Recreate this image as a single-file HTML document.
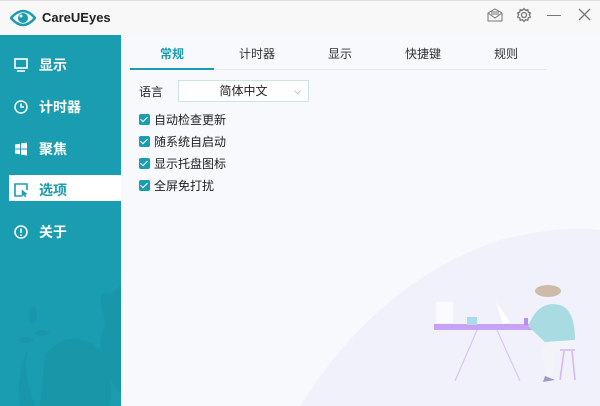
<!DOCTYPE html>
<html><head><meta charset="utf-8"><style>
body{margin:0;width:600px;height:406px;overflow:hidden;font-family:"Liberation Sans","Noto Sans CJK SC",sans-serif;background:#f7f9fd;position:relative}
.tb{position:absolute;left:0;top:0;width:600px;height:35px;background:#f8f8f8;border-top:1px solid #ddd;box-sizing:border-box}
.side{position:absolute;left:0;top:35px;width:121px;height:371px;background:#1a9db0;overflow:hidden}
.it{position:absolute;left:14px;color:#fff;font-size:14px;font-weight:bold;display:flex;align-items:center}
.it span{margin-left:11px}
.sel{position:absolute;left:9px;top:140px;width:112px;height:26px;background:#fff}
.tab{position:absolute;top:45px;font-size:12px;color:#333}
.cb{position:absolute;left:139px;font-size:12px;color:#222;display:flex;align-items:center}
.cb i{width:11px;height:11px;background:#1a9db0;border-radius:2px;margin-right:4px;display:inline-block;position:relative}
.cb i:after{content:"";position:absolute;left:3px;top:1px;width:3px;height:6px;border:solid #fff;border-width:0 1.5px 1.5px 0;transform:rotate(45deg)}
</style></head><body>
<svg style="position:absolute;left:0;top:0" width="600" height="406"><path d="M300 406 Q380 280 500 240 Q560 225 600 230 V406Z" fill="#f0f1fb"/>
<rect x="436" y="302" width="17" height="21" fill="#fbfbff"/>
<rect x="434" y="324" width="111" height="6" fill="#c9a3f3"/>
<rect x="467" y="317" width="10" height="8" fill="#a9dcea"/>
<path d="M496 302 L510 322 L503 324Z" fill="#fff"/>
<path d="M477 330 L455 381 M497 330 L520 381" stroke="#dbbdf8" stroke-width="1"/>
<rect x="524" y="318" width="4" height="7" fill="#b88ef0"/>
<ellipse cx="548" cy="291" rx="13" ry="6" fill="#cfbca8"/>
<path d="M530 322 Q540 300 560 305 Q575 310 575 340 L545 342 L528 326Z" fill="#a9dbe2"/>
<path d="M548 342 L575 340 L568 350 L555 352 L552 376 L545 376 L542 350Z" fill="#f2f4f8"/>
<path d="M545 376 l10 4 l-12 2z" fill="#9a9cc0"/>
<path d="M560 350 h15 M564 351 L560 380 M572 351 L575 380" stroke="#d6b4f8" stroke-width="1.5"/></svg>
<div class="tb">
<svg style="position:absolute;left:10px;top:7px" width="26" height="20" viewBox="0 0 26 20"><path d="M1 10 Q13 -4 25 10 Q13 24 1 10Z" fill="none" stroke="#1a9db0" stroke-width="2.5"/><circle cx="13" cy="10" r="5" fill="#1a9db0"/><circle cx="11" cy="8" r="1.5" fill="#fff"/></svg>
<div style="position:absolute;left:42px;top:9px;font-size:13px;font-weight:bold;color:#222">CareUEyes</div>
<svg style="position:absolute;left:487px;top:7px" width="16" height="14" viewBox="0 0 16 14" fill="none" stroke="#777"><path d="M1 5 L8 1 L15 5 V13 H1Z M1 5 L8 10 L15 5 M4 4h8M4 6h8"/></svg>
<svg style="position:absolute;left:516px;top:6px" width="16" height="16" viewBox="0 0 16 16" fill="none" stroke="#777" stroke-width="1.3"><circle cx="8" cy="8" r="2.5"/><path d="M8 1.5l1.5 1.8 2.3-.6.4 2.3 2.2 1-1 2 1 2-2.2 1-.4 2.3-2.3-.6L8 14.5l-1.5-1.8-2.3.6-.4-2.3-2.2-1 1-2-1-2 2.2-1 .4-2.3 2.3.6z"/></svg>
<div style="position:absolute;left:547px;top:14px;width:14px;height:1px;background:#777"></div>
<svg style="position:absolute;left:578px;top:7px" width="13" height="13" stroke="#777" stroke-width="1.3"><path d="M1 1L12 12M12 1L1 12"/></svg>
</div>
<div class="side">
<svg style="position:absolute;left:0;top:210px" width="121" height="161" viewBox="0 0 121 161" fill="#1996a8"><path d="M110 50 Q95 40 105 80 Q90 110 121 150 V40Z"/><path d="M45 110 Q70 80 100 105 Q115 130 110 161 H40Z"/><path d="M30 100 Q20 120 35 161 H20 Q15 130 30 100Z"/><ellipse cx="33" cy="70" rx="4" ry="8"/><ellipse cx="42" cy="88" rx="7" ry="3"/><ellipse cx="26" cy="95" rx="7" ry="3"/></svg>
<div class="it" style="top:20px"><svg width="14" height="14" fill="none" stroke="#fff" stroke-width="1.6"><rect x="1" y="1" width="12" height="9"/><path d="M3 13h8"/></svg><span>显示</span></div>
<div class="it" style="top:62px"><svg width="14" height="14" fill="none" stroke="#fff" stroke-width="1.5"><circle cx="7" cy="7" r="6"/><path d="M7 3.5V7h3"/></svg><span>计时器</span></div>
<div class="it" style="top:104px"><svg width="14" height="14" fill="#fff"><path d="M1 2.5l5-.8v4.8H1zM7 1.5l6-1v6H7zM1 7.5h5v4.8l-5-.8zM7 7.5h6v6l-6-1z"/></svg><span>聚焦</span></div>
<div class="sel"></div>
<div class="it" style="top:145px;color:#1a9db0"><svg width="14" height="14" fill="none" stroke="#1a9db0" stroke-width="1.6"><path d="M8 13H1V1h12v6"/><path d="M8 7l5 4-2 .5 1 2-1 .5-1-2-2 1z" fill="#1a9db0" stroke-width="0.5"/></svg><span>选项</span></div>
<div class="it" style="top:187px"><svg width="14" height="14" fill="none" stroke="#fff" stroke-width="1.5"><circle cx="7" cy="7" r="6"/><path d="M7 3.5v4.5M7 9.5v1.5"/></svg><span>关于</span></div>
</div>
<div style="position:absolute;left:130px;top:69px;width:417px;height:1px;background:#e6eaf0"></div>
<div style="position:absolute;left:130px;top:68px;width:84px;height:2px;background:#1a9db0"></div>
<div class="tab" style="left:160px;color:#1a9db0;font-weight:bold">常规</div>
<div class="tab" style="left:239px">计时器</div>
<div class="tab" style="left:328px">显示</div>
<div class="tab" style="left:405px">快捷键</div>
<div class="tab" style="left:494px">规则</div>
<div style="position:absolute;left:139px;top:83px;font-size:12px;color:#222">语言</div>
<div style="position:absolute;left:178px;top:80px;width:131px;height:22px;background:#fff;border:1px solid #cde3ea;box-sizing:border-box;font-size:12px;color:#222;text-align:center;line-height:20px">简体中文<span style="position:absolute;right:7px;top:0;color:#777;font-size:9px">&#x2335;</span></div>
<div class="cb" style="top:111px"><i></i>自动检查更新</div>
<div class="cb" style="top:133px"><i></i>随系统自启动</div>
<div class="cb" style="top:155px"><i></i>显示托盘图标</div>
<div class="cb" style="top:177px"><i></i>全屏免打扰</div>
</body></html>
